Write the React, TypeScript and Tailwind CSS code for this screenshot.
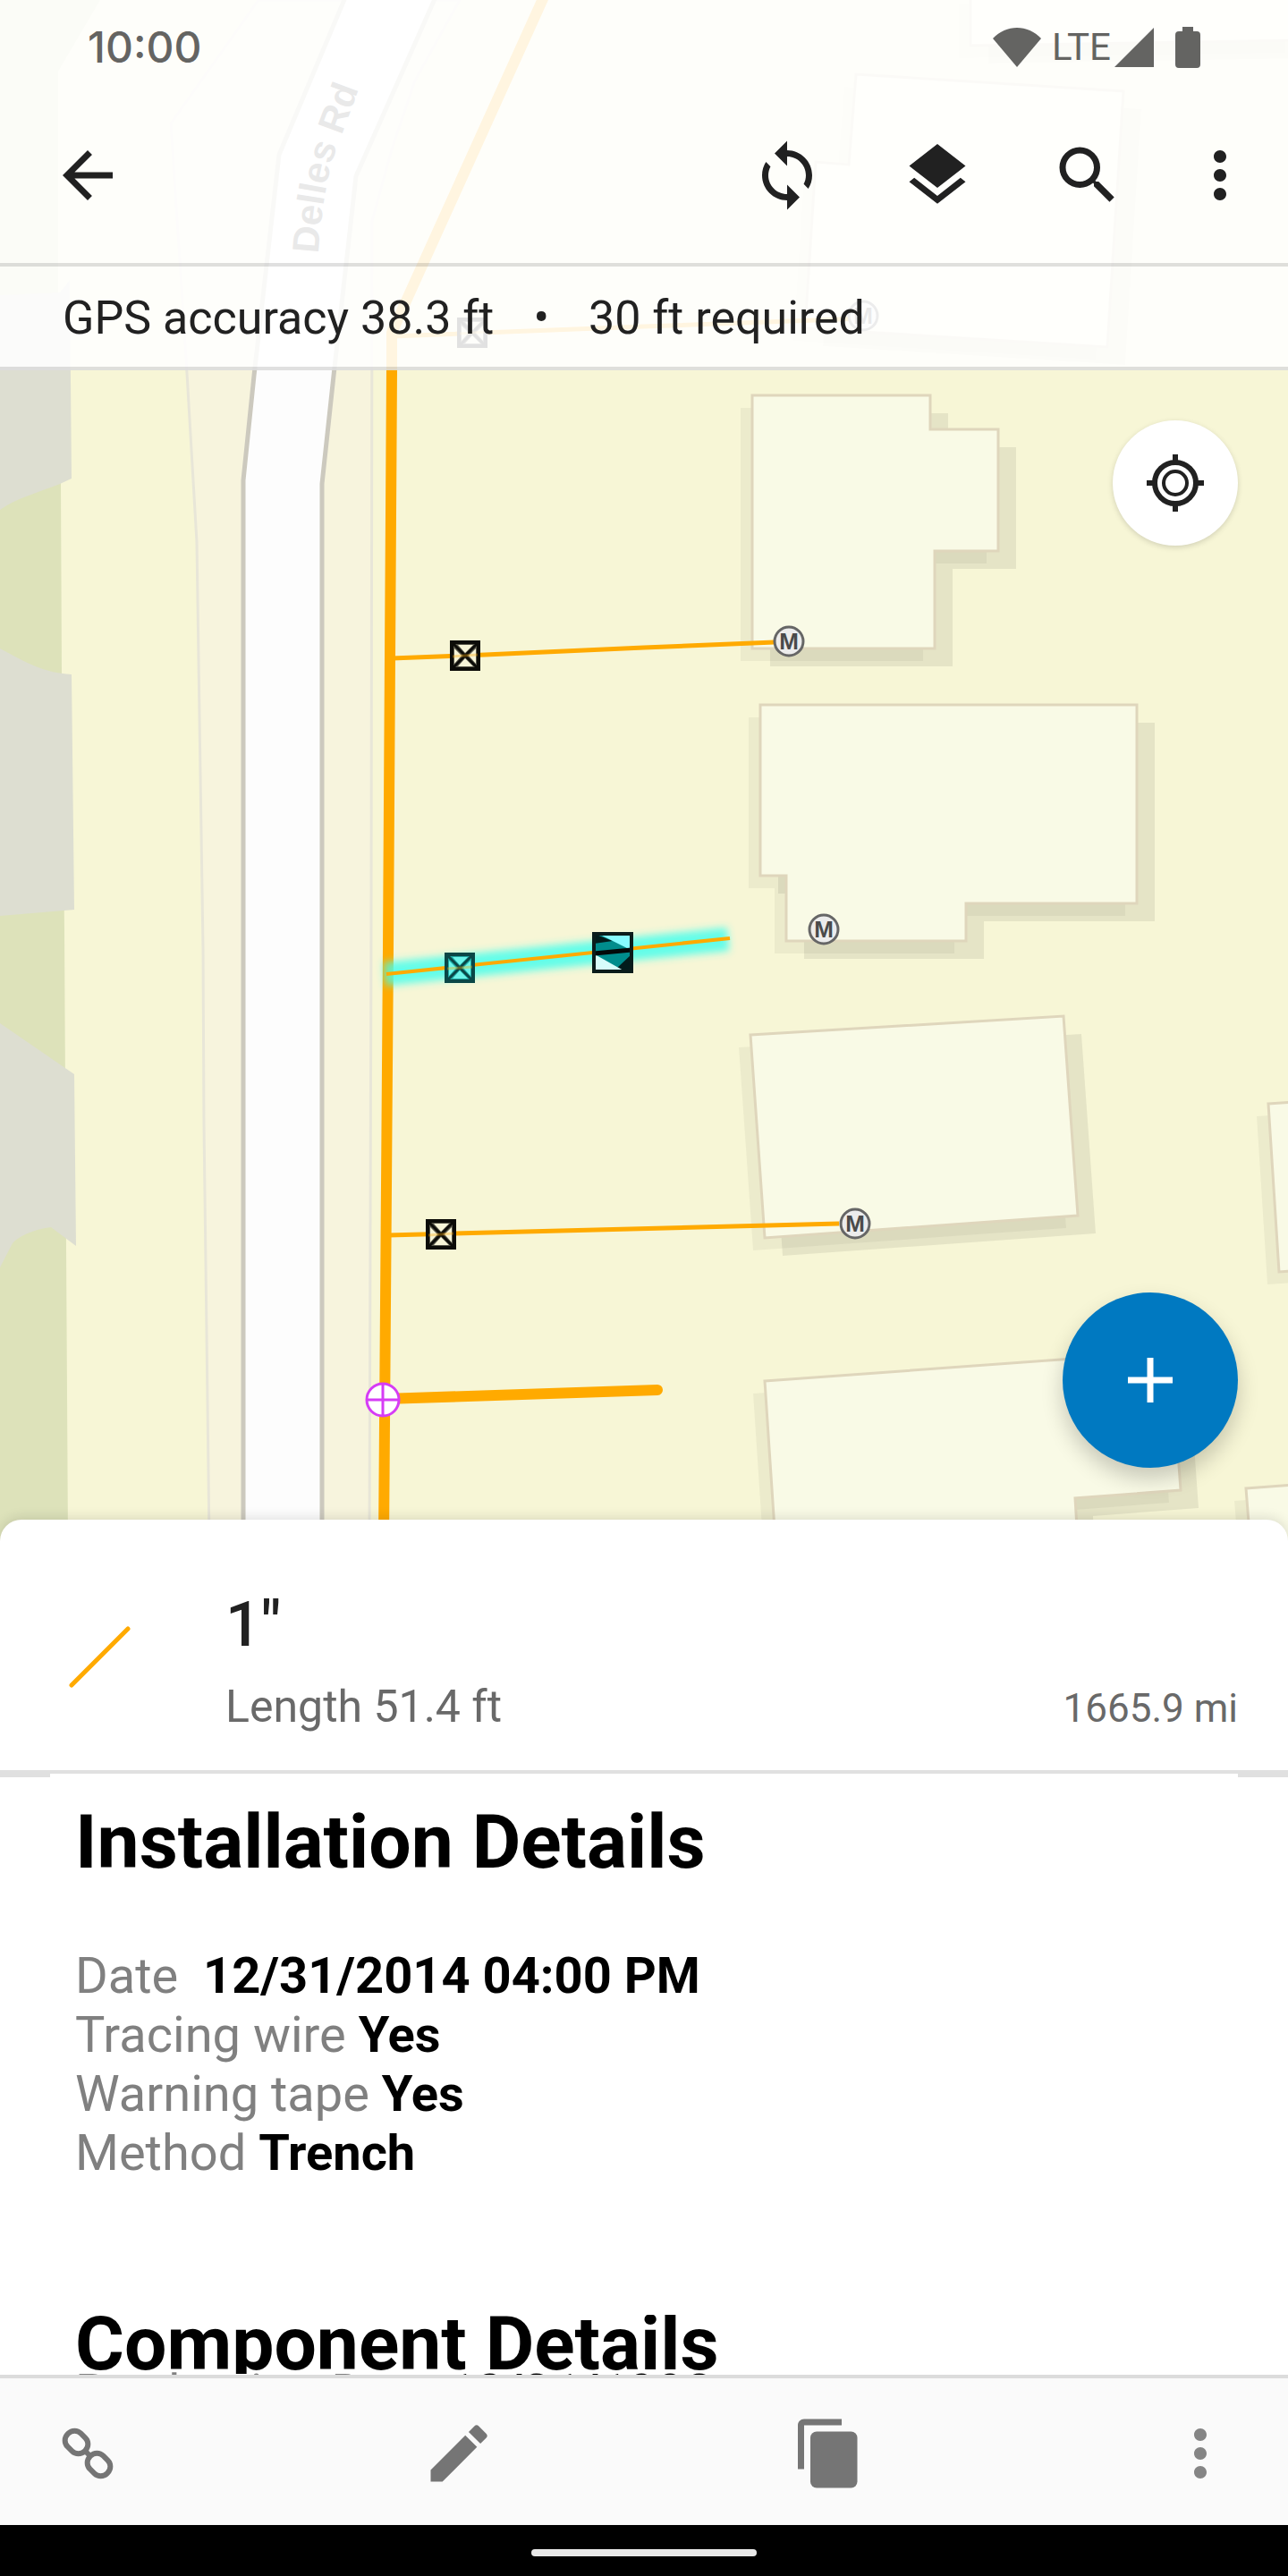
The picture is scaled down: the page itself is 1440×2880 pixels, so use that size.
import type { ReactNode } from "react";
import { MdArrowBack, MdEdit, MdLayers, MdMoreVert, MdSearch, MdSync } from "react-icons/md";

const buildings = [
  "957,83 1256,102 1238,388 900,367 912,181 949,184",
  "1085,-10 1085,51 1450,45 1450,-10",
  "841,442 1040,442 1040,480 1116,480 1116,616 1045,616 1045,725 841,725",
  "850,788 1271,788 1271,1010 1080,1010 1080,1052 879,1052 879,979 850,979",
  "839,1157 1189,1136 1205,1359 855,1384",
  "855,1544 1309,1511 1320,1666 1202,1675 1206,1740 868,1740",
  "1418,1234 1460,1231 1460,1420 1430,1422",
  "1393,1664 1460,1659 1460,1740 1399,1740",
];

const meters = [
  { x: 965, y: 353 },
  { x: 882, y: 717 },
  { x: 921, y: 1039 },
  { x: 956, y: 1368 },
];

const valves = [
  { x: 528, y: 372, selected: false },
  { x: 520, y: 733, selected: false },
  { x: 514, y: 1082, selected: true },
  { x: 493, y: 1380, selected: false },
];

function Building({ points }: { points: string }) {
  return (
    <g>
      <polygon points={points} transform="translate(-13 14)" fill="#000" fillOpacity="0.045" />
      <polygon points={points} transform="translate(20 20)" fill="#000" fillOpacity="0.07" />
      <polygon points={points} fill="#f9fae6" stroke="#dfd6bc" strokeWidth="3" />
    </g>
  );
}

function Meter({ x, y }: { x: number; y: number }) {
  return (
    <g>
      <circle cx={x} cy={y} r="16" fill="#ececec" stroke="#666" strokeWidth="3" />
      <text x={x} y={y + 9} textAnchor="middle" fontFamily="Liberation Sans, sans-serif" fontWeight="bold" fontSize="26" fill="#4a4a4a">
        M
      </text>
    </g>
  );
}

function Valve({ x, y, selected }: { x: number; y: number; selected: boolean }) {
  const ink = selected ? "#0a4747" : "#0c0c08";
  return (
    <g transform={`translate(${x} ${y})`} stroke={ink} fill="none">
      <rect x="-15" y="-15" width="30" height="30" strokeWidth="4" fill={selected ? "#1fa9a4" : "#57564a"} />
      <path d="M-8 -12H9L0 -3ZM-8 12H9L0 3ZM-12 -8V9L-4 0ZM12 -8V9L4 0Z" fill={selected ? "#6cf5ea" : "#f7f5d8"} stroke="none" />
      <path d="M-13 -13L13 13M13 -13L-13 13" strokeWidth="3" />
      <path d="M-14 1L14 -1" stroke="#ffaa00" strokeWidth="3" strokeOpacity="0.35" />
    </g>
  );
}

function MapCanvas() {
  return (
    <svg
      className="absolute inset-0 h-full w-full"
      viewBox="0 0 1440 1723"
      preserveAspectRatio="xMidYMin slice"
      role="img"
      aria-label="Gas network map around Delles Rd"
    >
      <defs>
        <filter id="glow" x="-10%" y="-80%" width="120%" height="260%">
          <feGaussianBlur stdDeviation="4" />
        </filter>
        <path id="street" d="M356 284Q360 222 372 178L412 70" />
      </defs>
      <rect width="1440" height="1723" fill="#f7f6d6" />

      <path d="M0 0H112L65 80V330L68 541L69 753L72 1040L74 1395L76 1723H0Z" fill="#dde2ba" />
      <path d="M0 330L67 327L78 313L80 535L67 541C45 550 20 556 0 570Z" fill="#ddded1" />
      <path d="M0 725C30 741 48 752 80 754L83 1017L0 1024Z" fill="#ddded1" />
      <path d="M0 1144L83 1201L85 1393L57 1372C35 1375 20 1383 14 1390L0 1417Z" fill="#ddded1" />

      <path
        d="M289 0L191 138L200 277L208 400L220 606L227 1060L228 1257L234 1723H413L415 1040L416 247L438 167L464 90L514 0Z"
        fill="#f7f4dd"
        stroke="#e8e6d8"
        strokeWidth="3"
      />
      <path
        d="M389 -10L312 173L284 420L272 537V1730H360V541L373 420L398 197L490 -10Z"
        fill="#fdfdfd"
        stroke="#ccc9be"
        strokeWidth="5"
      />
      <text fontFamily="Liberation Sans, sans-serif" fontWeight="bold" fontSize="42" fill="#4a4a4a">
        <textPath href="#street">Delles Rd</textPath>
      </text>

      {buildings.map((points) => (
        <Building key={points} points={points} />
      ))}

      <g fill="none" stroke="#ffaa00">
        <path d="M610 -8L438 372V413L434 1060L429 1723" strokeWidth="12" strokeLinejoin="round" />
        <path d="M430 1564L735 1554" strokeWidth="12" strokeLinecap="round" />
        <path d="M438 376L720 365L965 356" strokeWidth="5" />
        <path d="M438 736L520 733L720 724L866 718" strokeWidth="5" />
        <path d="M434 1381L938 1368" strokeWidth="5" />
      </g>

      <path d="M430 1089L814 1050" stroke="#3effee" strokeOpacity="0.8" strokeWidth="26" filter="url(#glow)" />
      <path d="M432 1089L816 1049" stroke="#ffaa00" strokeWidth="4" />

      {valves.map((v) => (
        <Valve key={v.y} {...v} />
      ))}
      {meters.map((m) => (
        <Meter key={m.y} {...m} />
      ))}

      <g transform="translate(685 1065)">
        <rect x="-21" y="-21" width="42" height="42" fill="#008c8c" />
        <path d="M-21 -21L0 -13L-21 -10ZM21 21L4 18L21 2Z" fill="#021c1c" />
        <path d="M-14 -20H20V-3Z" fill="#86fbff" />
        <path d="M-20 2V20H12Z" fill="#d8fdfb" />
        <path d="M-21 1L21 -3" stroke="#020808" strokeWidth="5" />
        <rect x="-21" y="-21" width="42" height="42" fill="none" stroke="#0a1c1c" strokeWidth="4" />
      </g>

      <g stroke="#d63cf5" strokeWidth="3">
        <circle cx="428" cy="1565" r="18" fill="#fff" />
        <path d="M428 1547V1583M410 1565H446" fill="none" />
      </g>
    </svg>
  );
}

function IconButton({ label, children }: { label: string; children: ReactNode }) {
  return (
    <button type="button" aria-label={label} className="flex size-[84px] shrink-0 items-center justify-center">
      {children}
    </button>
  );
}

function StatusBar() {
  return (
    <div className="flex h-[98px] items-center justify-between px-[98px] pt-2 text-[#646462]">
      <span className="font-['Inter',sans-serif] text-[48px] leading-none font-medium">10:00</span>
      <div className="flex items-center">
        <svg className="h-11 w-[54px]" viewBox="0 0 54 44" fill="currentColor" aria-label="Wi-Fi">
          <path d="M27 44L0 12C15 -4 39 -4 54 12Z" />
        </svg>
        <span className="ml-3 text-[42px] leading-none">LTE</span>
        <svg className="ml-1 h-11 w-11" viewBox="0 0 44 44" fill="currentColor" aria-label="Signal">
          <path d="M44 0V44H0Z" />
        </svg>
        <svg className="ml-6 h-[46px] w-[28px]" viewBox="0 0 28 46" fill="currentColor" aria-label="Battery">
          <path d="M8 0H20V5H24Q28 5 28 9V42Q28 46 24 46H4Q0 46 0 42V9Q0 5 4 5H8Z" />
        </svg>
      </div>
    </div>
  );
}

function Header() {
  return (
    <header className="relative bg-white/88 text-[#212121]">
      <StatusBar />
      <div className="flex h-[200px] items-center justify-between border-b-4 border-black/12 pr-[34px] pl-14">
        <IconButton label="Back">
          <MdArrowBack size={84} />
        </IconButton>
        <nav className="flex items-center gap-16">
          <div className="flex gap-[84px]">
            <IconButton label="Sync">
              <MdSync size={84} />
            </IconButton>
            <IconButton label="Layers">
              <MdLayers size={84} />
            </IconButton>
            <IconButton label="Search">
              <MdSearch size={84} />
            </IconButton>
          </div>
          <IconButton label="More options">
            <MdMoreVert size={84} />
          </IconButton>
        </nav>
      </div>
      <p className="flex h-[116px] items-center gap-11 border-b-4 border-black/12 px-[70px] pt-1 text-[52px]">
        <span>GPS accuracy 38.3 ft</span>
        <span>•</span>
        <span>30 ft required</span>
      </p>
    </header>
  );
}

const details = [
  { label: "Date\u00a0", value: "12/31/2014 04:00 PM" },
  { label: "Tracing wire", value: "Yes" },
  { label: "Warning tape", value: "Yes" },
  { label: "Method", value: "Trench" },
];

export default function App() {
  return (
    <div className="flex h-screen min-h-[1500px] flex-col overflow-hidden bg-white font-['Roboto',sans-serif]">
      <main className="relative flex min-h-0 flex-1 flex-col overflow-hidden">
        <MapCanvas />
        <Header />
        <div className="relative flex flex-1 flex-col items-end justify-between px-14 pt-14 pb-[82px]">
          <button
            type="button"
            aria-label="Current location"
            className="flex size-[140px] items-center justify-center rounded-full bg-white text-[#212121] shadow-[0_2px_6px_rgba(0,0,0,0.15)]"
          >
            <svg className="size-16" viewBox="0 0 64 64" fill="none" stroke="currentColor">
              <circle cx="32" cy="32" r="23" strokeWidth="6" />
              <circle cx="32" cy="32" r="13" strokeWidth="4" />
              <path d="M32 0V8M32 56V64M0 32H8M56 32H64" strokeWidth="6" />
            </svg>
          </button>
          <button
            type="button"
            aria-label="Add feature"
            className="flex size-[196px] items-center justify-center rounded-full bg-[#0079c1] text-white shadow-[0_12px_24px_rgba(0,0,0,0.2)]"
          >
            <svg className="size-[50px]" viewBox="0 0 50 50" fill="none" stroke="currentColor" strokeWidth="7">
              <path d="M25 0V50M0 25H50" />
            </svg>
          </button>
        </div>
      </main>

      <section className="relative -mt-6 rounded-t-3xl bg-white shadow-[0_-2px_14px_rgba(0,0,0,0.12)]">
        <div className="flex h-[284px] items-center border-b-4 border-[#e0e0e0] pr-14 pl-[77px]">
          <svg className="mt-7 size-[70px] shrink-0" viewBox="0 0 70 70" aria-hidden="true">
            <path d="M3 66L66 3" stroke="#ffaa00" strokeWidth="5" strokeLinecap="round" />
          </svg>
          <div className="ml-[105px] flex flex-1 flex-col gap-[22px] pt-[34px]">
            <h1 className="text-[70px] leading-[84px] font-medium text-[#212121]">1"</h1>
            <p className="flex items-baseline justify-between leading-[56px] text-[#696969]">
              <span className="text-[50px]">Length 51.4 ft</span>
              <span className="text-[44px]">1665.9 mi</span>
            </p>
          </div>
        </div>
        <div className="h-[672px] overflow-hidden">
          <div className="flex justify-between">
            <div className="h-1 w-14 bg-[#e0e0e0]" />
            <div className="h-1 w-14 bg-[#e0e0e0]" />
          </div>
          <div className="px-[84px] pt-10 text-[56px] leading-[66px] text-black">
            <h2 className="text-[84px] leading-[66px] font-bold">Installation Details</h2>
            <dl className="mt-[83px]">
              {details.map((d) => (
                <div key={d.label}>
                  <dt className="inline text-[#808080]">{d.label}</dt> <dd className="inline font-bold">{d.value}</dd>
                </div>
              ))}
            </dl>
            <h2 className="mt-[148px] overflow-hidden text-[84px] leading-[66px] font-bold">Component Details</h2>
            <dl className="leading-[42px]">
              <dt className="inline text-[#808080]">Production Date</dt> <dd className="inline font-bold">12/31/1998</dd>
            </dl>
          </div>
        </div>
      </section>

      <footer className="relative shrink-0">
        <div className="flex h-[168px] items-center justify-between border-t-4 border-[#dcdcdc] bg-[#fafafa] px-14 pt-1 text-[#757575]">
          <IconButton label="Link">
            <svg className="size-[84px]" viewBox="0 0 84 84" fill="none" stroke="currentColor" strokeWidth="6">
              <rect x="16" y="19" width="27" height="21" rx="10" transform="rotate(45 29.5 29.5)" />
              <rect x="41" y="44" width="27" height="21" rx="10" transform="rotate(45 54.5 54.5)" />
              <path d="M39 39L45 45" />
            </svg>
          </IconButton>
          <IconButton label="Edit">
            <MdEdit size={84} />
          </IconButton>
          <IconButton label="Copy">
            <svg className="size-[84px]" viewBox="0 0 24 24" fill="currentColor">
              <path d="M16 1H4C2.9 1 2 1.9 2 3V17H4V3H16V1Z" />
              <rect x="6" y="5" width="15" height="18" rx="2" />
            </svg>
          </IconButton>
          <IconButton label="More actions">
            <MdMoreVert size={84} className="text-[#858585]" />
          </IconButton>
        </div>
        <div className="flex h-[57px] items-center justify-center bg-black pt-1">
          <div className="h-2 w-[252px] rounded-full bg-[#e8e8e8]" />
        </div>
      </footer>
    </div>
  );
}
